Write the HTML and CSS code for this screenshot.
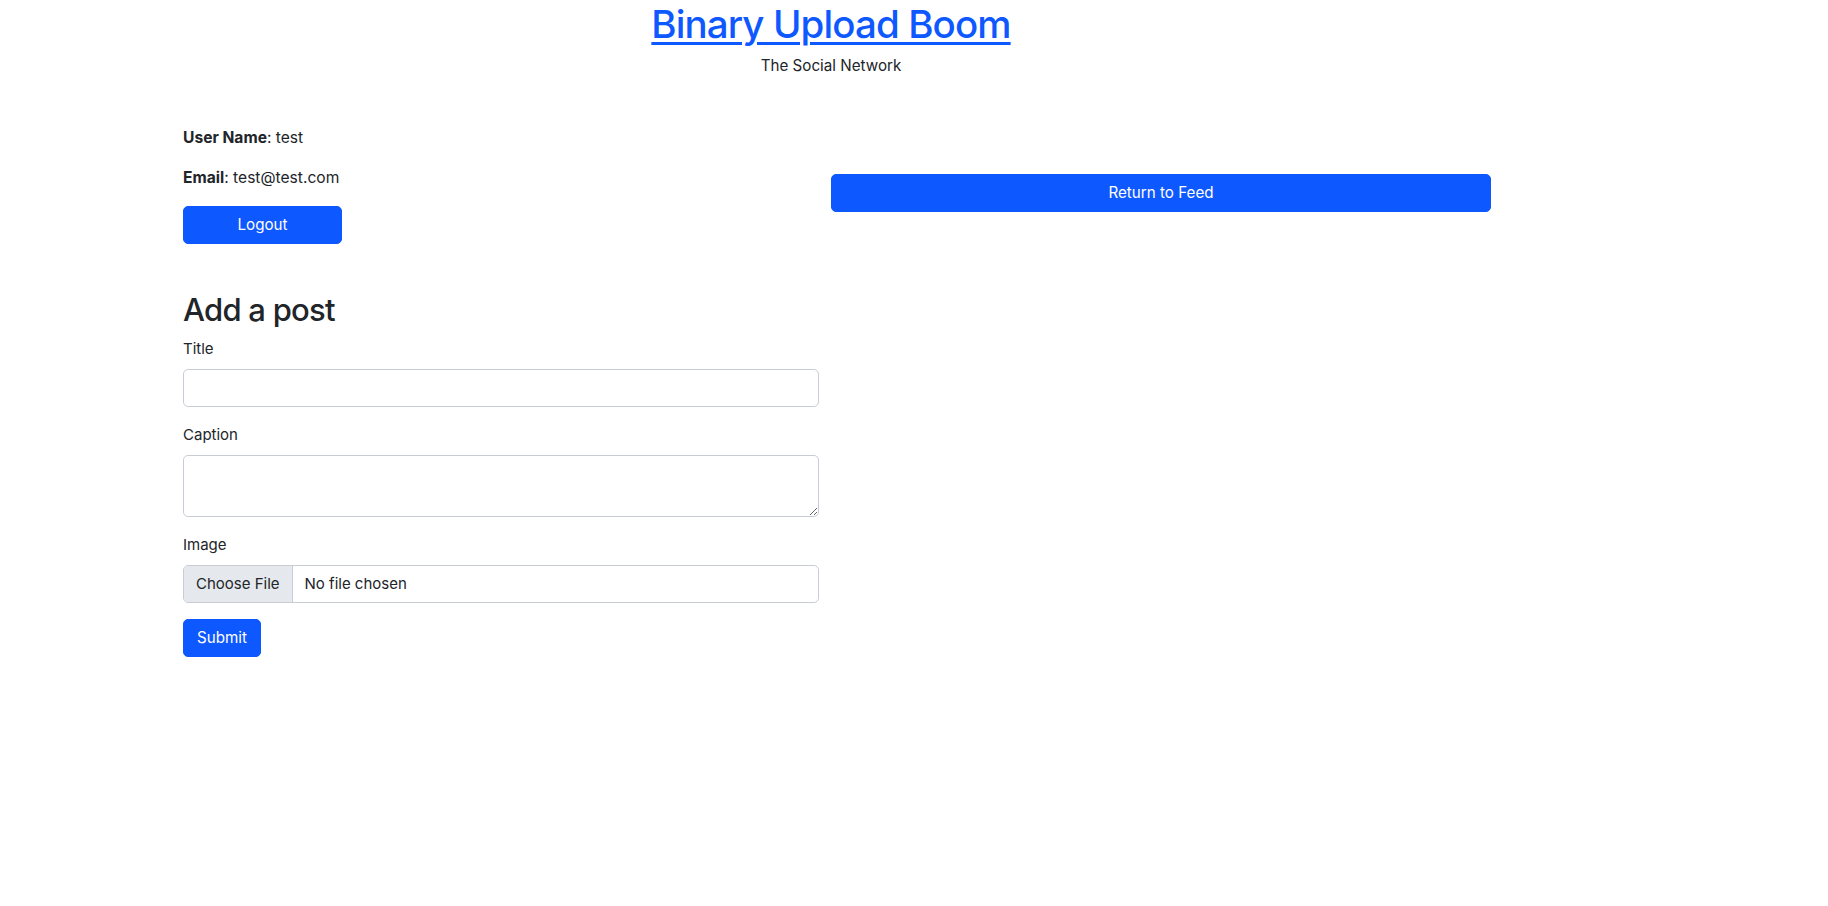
FILE: index.html
```html
<!DOCTYPE html>
<html lang="en">
<head>
<meta charset="utf-8">
<title>Binary Upload Boom</title>
<link rel="stylesheet" href="styles.css">
</head>
<body>
<div class="container">
  <header class="site-header">
    <h1 class="site-title"><a href="#">Binary Upload Boom</a></h1>
    <p class="site-tagline">The Social Network</p>
  </header>

  <section class="profile-row">
    <div class="profile-info">
      <p><strong>User Name</strong>: test</p>
      <p><strong>Email</strong>: test@test.com</p>
      <a href="#" class="btn btn-primary btn-logout">Logout</a>
    </div>
    <div class="profile-actions">
      <a href="#" class="btn btn-primary btn-feed">Return to Feed</a>
    </div>
  </section>

  <section class="post-form">
    <h2 class="form-heading">Add a post</h2>
    <form>
      <div class="field">
        <label for="title" class="form-label">Title</label>
        <input type="text" id="title" class="form-control">
      </div>
      <div class="field">
        <label for="caption" class="form-label">Caption</label>
        <textarea id="caption" class="form-control form-textarea" rows="2"></textarea>
      </div>
      <div class="field">
        <label for="image" class="form-label">Image</label>
        <input type="file" id="image" class="form-control form-file">
      </div>
      <button type="submit" class="btn btn-primary btn-submit">Submit</button>
    </form>
  </section>
</div>
</body>
</html>
```
FILE: styles.css
```css
*, *::before, *::after { box-sizing: border-box; }

body {
  margin: 0;
  font-family: Inter, "Noto Sans", "Liberation Sans", sans-serif;
  font-size: 15px;
  line-height: 1.5;
  color: #212529;
  background: #fff;
}

.container {
  width: 1320px;
  margin-left: 171px;
  padding: 0 12px;
}

.site-header {
  text-align: center;
}

.site-title {
  margin: 0 0 6px;
  font-size: 38.5px;
  font-weight: 500;
  line-height: 48px;
  letter-spacing: -0.9px;
}

.site-title a {
  color: #0e58ff;
  text-decoration: underline;
  text-decoration-thickness: 3px;
  text-underline-offset: 4px;
}

.site-tagline {
  margin: 0;
  font-size: 15.2px;
  line-height: 24px;
}

.profile-row {
  display: flex;
  align-items: center;
  margin-top: 48px;
}

.profile-info {
  flex: 0 0 648px;
}

.profile-info p {
  margin: 0 0 16px;
  font-size: 15.6px;
  line-height: 24px;
}

.profile-info strong { font-weight: 700; }

.profile-actions {
  flex: 0 0 660px;
}

.btn {
  display: inline-block;
  padding: 6px 12px;
  font-family: inherit;
  font-size: 15.2px;
  line-height: 24px;
  text-align: center;
  text-decoration: none;
  border: 1px solid transparent;
  border-radius: 5px;
  cursor: pointer;
}

.btn-primary {
  color: #fff;
  background: #0e58ff;
  border-color: #0e58ff;
}

.btn-logout {
  width: 159px;
  margin-bottom: 16px;
}

.btn-feed {
  width: 100%;
}

.btn-submit {
  padding: 6px 13px;
}

.post-form {
  width: 636px;
  margin-top: 31px;
}

.form-heading {
  margin: 0 0 8px;
  font-size: 31px;
  font-weight: 500;
  line-height: 38px;
  letter-spacing: -0.75px;
}

.field {
  margin-bottom: 16px;
}

.form-label {
  display: inline-block;
  margin-bottom: 8px;
  font-size: 15px;
  line-height: 24px;
}

.form-control {
  display: block;
  width: 100%;
  padding: 6px 12px;
  font-family: inherit;
  font-size: 15px;
  line-height: 24px;
  color: #212529;
  background: #fff;
  border: 1px solid #c8ccd4;
  border-radius: 5px;
}

.form-textarea {
  height: 62px;
  resize: vertical;
}

.form-file {
  overflow: hidden;
}

.form-file::file-selector-button {
  padding: 6px 12px;
  margin: -6px 12px -6px -12px;
  font-family: inherit;
  font-size: 15px;
  line-height: 24px;
  color: #212529;
  background: #e5e8ec;
  border: 0 solid #c8ccd4;
  border-right-width: 1px;
  border-radius: 0;
}
```
